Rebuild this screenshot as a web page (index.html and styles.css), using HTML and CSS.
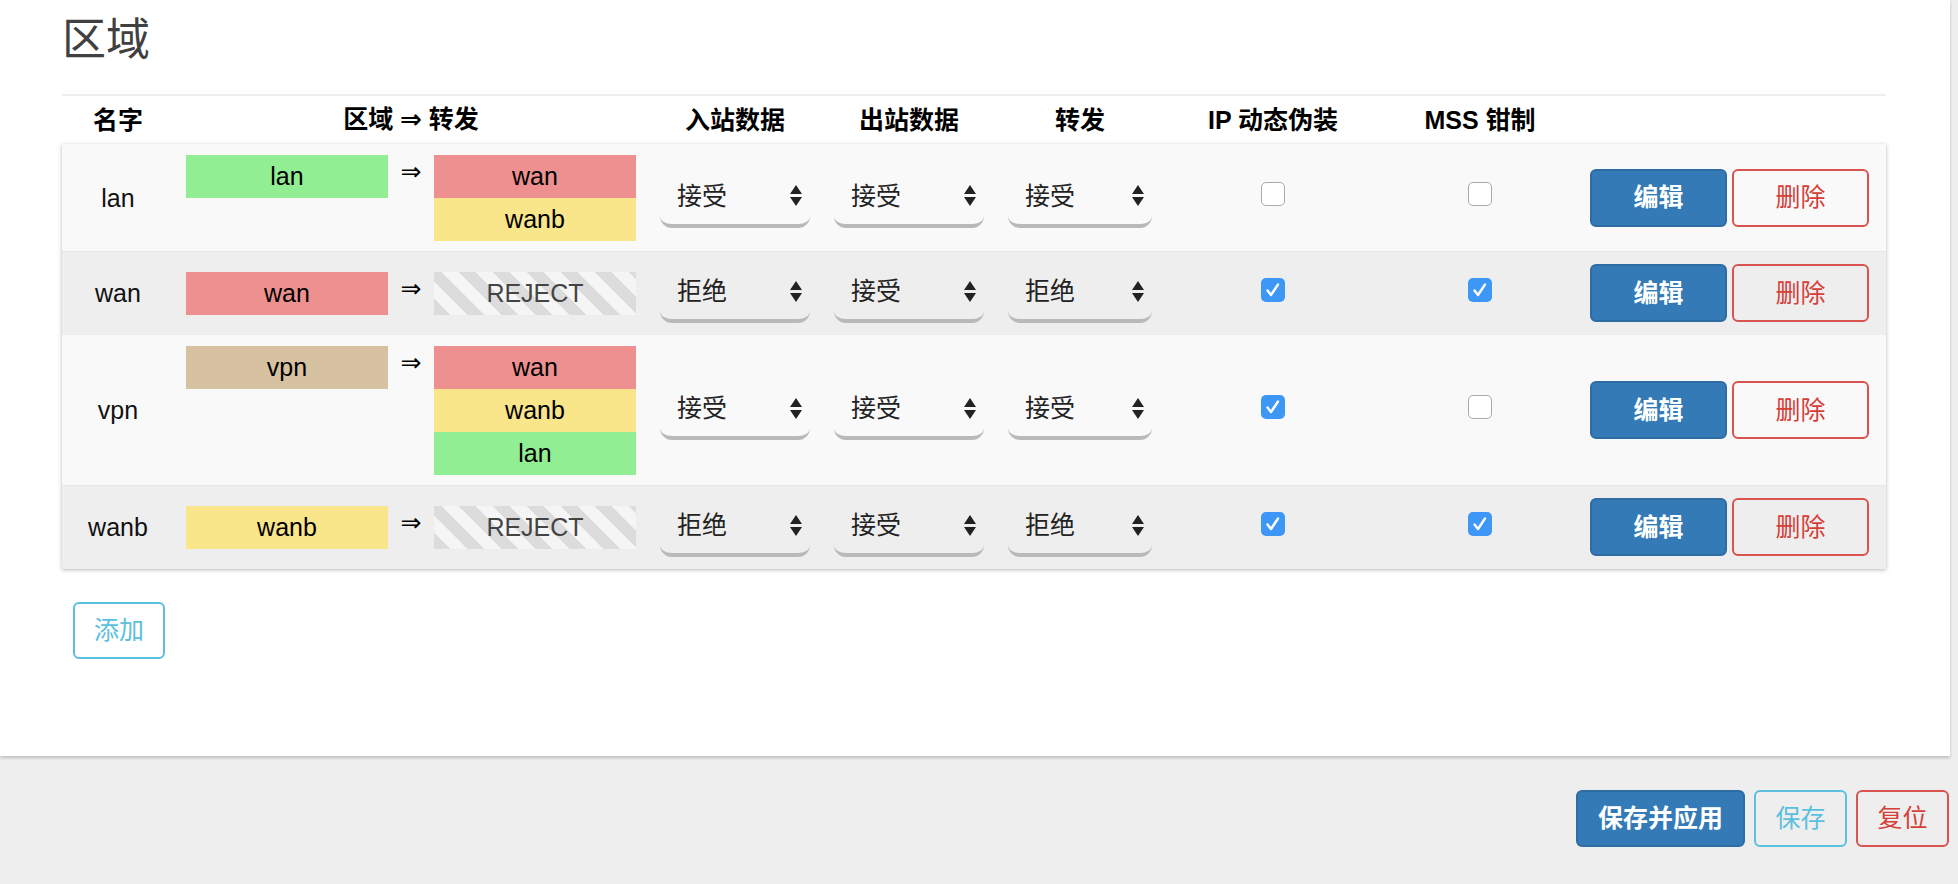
FILE: index.html
```html
<!DOCTYPE html>
<html lang="zh-CN">
<head>
<meta charset="utf-8">
<title>区域</title>
<link rel="stylesheet" href="styles.css">
</head>
<body>
<div class="panel">
  <h2 class="title">区域</h2>
  <div class="rule"></div>
  <div class="grid head">
    <div>名字</div>
    <div>区域 <span class="harrow">⇒</span> 转发</div>
    <div>入站数据</div>
    <div>出站数据</div>
    <div>转发</div>
    <div>IP 动态伪装</div>
    <div>MSS 钳制</div>
    <div></div>
  </div>
  <div class="tbody">
    <div class="grid row odd">
      <div class="cell name">lan</div>
      <div class="cell zone">
        <div class="badge c-lan">lan</div>
        <div class="arrow">⇒</div>
        <div class="stack"><div class="badge c-wan">wan</div><div class="badge c-wanb">wanb</div></div>
      </div>
      <div class="cell"><div class="sel"><span>接受</span><svg class="updown" width="12" height="21" viewBox="0 0 12 21"><path d="M6 0L12 9H0Z M0 12H12L6 21Z"/></svg></div></div>
      <div class="cell"><div class="sel"><span>接受</span><svg class="updown" width="12" height="21" viewBox="0 0 12 21"><path d="M6 0L12 9H0Z M0 12H12L6 21Z"/></svg></div></div>
      <div class="cell"><div class="sel"><span>接受</span><svg class="updown" width="12" height="21" viewBox="0 0 12 21"><path d="M6 0L12 9H0Z M0 12H12L6 21Z"/></svg></div></div>
      <div class="cell"><span class="cb"></span></div>
      <div class="cell"><span class="cb"></span></div>
      <div class="cell actions"><button class="btn edit">编辑</button><button class="btn del">删除</button></div>
    </div>
    <div class="grid row even">
      <div class="cell name">wan</div>
      <div class="cell zone">
        <div class="badge c-wan">wan</div>
        <div class="arrow">⇒</div>
        <div class="stack"><div class="badge reject">REJECT</div></div>
      </div>
      <div class="cell"><div class="sel"><span>拒绝</span><svg class="updown" width="12" height="21" viewBox="0 0 12 21"><path d="M6 0L12 9H0Z M0 12H12L6 21Z"/></svg></div></div>
      <div class="cell"><div class="sel"><span>接受</span><svg class="updown" width="12" height="21" viewBox="0 0 12 21"><path d="M6 0L12 9H0Z M0 12H12L6 21Z"/></svg></div></div>
      <div class="cell"><div class="sel"><span>拒绝</span><svg class="updown" width="12" height="21" viewBox="0 0 12 21"><path d="M6 0L12 9H0Z M0 12H12L6 21Z"/></svg></div></div>
      <div class="cell"><span class="cb on"><svg width="24" height="24" viewBox="0 0 24 24"><path d="M6.5 12.5L10 17L17 6.5"/></svg></span></div>
      <div class="cell"><span class="cb on"><svg width="24" height="24" viewBox="0 0 24 24"><path d="M6.5 12.5L10 17L17 6.5"/></svg></span></div>
      <div class="cell actions"><button class="btn edit">编辑</button><button class="btn del">删除</button></div>
    </div>
    <div class="grid row odd">
      <div class="cell name">vpn</div>
      <div class="cell zone">
        <div class="badge c-vpn">vpn</div>
        <div class="arrow">⇒</div>
        <div class="stack"><div class="badge c-wan">wan</div><div class="badge c-wanb">wanb</div><div class="badge c-lan">lan</div></div>
      </div>
      <div class="cell"><div class="sel"><span>接受</span><svg class="updown" width="12" height="21" viewBox="0 0 12 21"><path d="M6 0L12 9H0Z M0 12H12L6 21Z"/></svg></div></div>
      <div class="cell"><div class="sel"><span>接受</span><svg class="updown" width="12" height="21" viewBox="0 0 12 21"><path d="M6 0L12 9H0Z M0 12H12L6 21Z"/></svg></div></div>
      <div class="cell"><div class="sel"><span>接受</span><svg class="updown" width="12" height="21" viewBox="0 0 12 21"><path d="M6 0L12 9H0Z M0 12H12L6 21Z"/></svg></div></div>
      <div class="cell"><span class="cb on"><svg width="24" height="24" viewBox="0 0 24 24"><path d="M6.5 12.5L10 17L17 6.5"/></svg></span></div>
      <div class="cell"><span class="cb"></span></div>
      <div class="cell actions"><button class="btn edit">编辑</button><button class="btn del">删除</button></div>
    </div>
    <div class="grid row even">
      <div class="cell name">wanb</div>
      <div class="cell zone">
        <div class="badge c-wanb">wanb</div>
        <div class="arrow">⇒</div>
        <div class="stack"><div class="badge reject">REJECT</div></div>
      </div>
      <div class="cell"><div class="sel"><span>拒绝</span><svg class="updown" width="12" height="21" viewBox="0 0 12 21"><path d="M6 0L12 9H0Z M0 12H12L6 21Z"/></svg></div></div>
      <div class="cell"><div class="sel"><span>接受</span><svg class="updown" width="12" height="21" viewBox="0 0 12 21"><path d="M6 0L12 9H0Z M0 12H12L6 21Z"/></svg></div></div>
      <div class="cell"><div class="sel"><span>拒绝</span><svg class="updown" width="12" height="21" viewBox="0 0 12 21"><path d="M6 0L12 9H0Z M0 12H12L6 21Z"/></svg></div></div>
      <div class="cell"><span class="cb on"><svg width="24" height="24" viewBox="0 0 24 24"><path d="M6.5 12.5L10 17L17 6.5"/></svg></span></div>
      <div class="cell"><span class="cb on"><svg width="24" height="24" viewBox="0 0 24 24"><path d="M6.5 12.5L10 17L17 6.5"/></svg></span></div>
      <div class="cell actions"><button class="btn edit">编辑</button><button class="btn del">删除</button></div>
    </div>
  </div>
  <button class="btn add">添加</button>
</div>
<div class="footer">
  <button class="btn apply">保存并应用</button>
  <button class="btn save">保存</button>
  <button class="btn reset">复位</button>
</div>
</body>
</html>
```

FILE: styles.css
```css
* { box-sizing: border-box; }
html, body { margin: 0; padding: 0; }
body {
  width: 1958px;
  height: 884px;
  overflow: hidden;
  background: #eeeeee;
  font-family: "Liberation Sans", "Noto Sans CJK SC", sans-serif;
  font-size: 25px;
  line-height: 1.2;
  color: #111;
}
.panel {
  width: 1950px;
  height: 756px;
  background: #fff;
  padding: 0 64px 0 62px;
  box-shadow: 0 2px 3px rgba(0,0,0,0.2);
  overflow: hidden;
}
.title {
  margin: 0;
  padding-top: 14px;
  font-size: 44px;
  line-height: 52px;
  font-weight: normal;
  color: #404040;
}
.rule {
  margin-top: 28px;
  border-top: 2px solid #eeeeee;
}
.grid {
  display: grid;
  grid-template-columns: 112px 474px 174px 174px 168px 218px 196px 308px;
  align-items: center;
}
.head {
  height: 48px;
  font-weight: bold;
  text-align: center;
  color: #000;
}
.harrow { font-family: "DejaVu Sans", sans-serif; font-weight: bold; font-size: 26px; }
.tbody {
  box-shadow: 0 1px 4px rgba(0,0,0,0.28);
}
.row.odd { background: #f9f9f9; }
.row.even { background: #eeeeee; box-shadow: inset 0 1px 0 #e6e6e6; }
.cell {
  padding: 12px 12px;
  text-align: center;
}
.name { color: #111; }
.zone {
  display: flex;
  align-items: flex-start;
  gap: 12px;
  padding: 11px 12px 10px;
}
.badge {
  width: 202px;
  height: 43px;
  line-height: 43px;
  text-align: center;
  color: #000;
}
.stack { display: flex; flex-direction: column; }
.c-lan { background: #92ee92; }
.c-wan { background: #ee9090; }
.c-wanb { background: #f9e58a; }
.c-vpn { background: #d6c1a1; }
.reject {
  color: #444;
  background: repeating-linear-gradient(45deg, #dcdcdc 0 12px, #f5f5f5 12px 24px);
}
.arrow {
  width: 22px;
  font-family: "DejaVu Sans", sans-serif;
  font-size: 25px;
  line-height: 25px;
  margin-top: 4px;
  color: #000;
}
.sel {
  height: 60px;
  display: flex;
  align-items: center;
  justify-content: space-between;
  padding: 0 8px 0 17px;
  border-bottom: 4px solid #b9b9b9;
  border-radius: 12px;
  color: #222;
  text-align: left;
}
.updown { fill: #222; display: block; }
.cb {
  display: block;
  width: 24px;
  height: 24px;
  margin: 0 auto 7px;
  border: 1px solid #aaaaaa;
  border-radius: 5px;
  background: #fff;
}
.cb.on {
  border: none;
  background: #3d97f7;
}
.cb svg { display: block; fill: none; stroke: #fff; stroke-width: 2.4; stroke-linecap: round; stroke-linejoin: round; }
.actions {
  display: flex;
  justify-content: flex-end;
  gap: 5px;
  padding: 12px 17px 12px 12px;
}
.btn {
  font-family: "Liberation Sans", "Noto Sans CJK SC", sans-serif;
  font-size: 25px;
  line-height: 1;
  height: 58px;
  border-radius: 6px;
  border: 2px solid;
  padding: 0;
  display: flex;
  align-items: center;
  justify-content: center;
  background: transparent;
  cursor: pointer;
}
.edit {
  width: 137px;
  background: #337ab7;
  border-color: #2e6da4;
  color: #fff;
  font-weight: bold;
}
.del {
  width: 137px;
  border-color: #d9534f;
  color: #d43f3a;
}
.add {
  margin: 33px 0 0 11px;
  width: 92px;
  height: 57px;
  border-color: #5bc0de;
  color: #5bc0de;
}
.footer {
  display: flex;
  justify-content: flex-end;
  gap: 9px;
  padding: 34px 9px 0 0;
}
.apply {
  width: 169px;
  height: 57px;
  background: #337ab7;
  border-color: #2e6da4;
  color: #fff;
  font-weight: bold;
}
.save {
  width: 93px;
  height: 57px;
  border-color: #5bc0de;
  color: #5bc0de;
}
.reset {
  width: 93px;
  height: 57px;
  border-color: #d9534f;
  color: #d43f3a;
}
```
